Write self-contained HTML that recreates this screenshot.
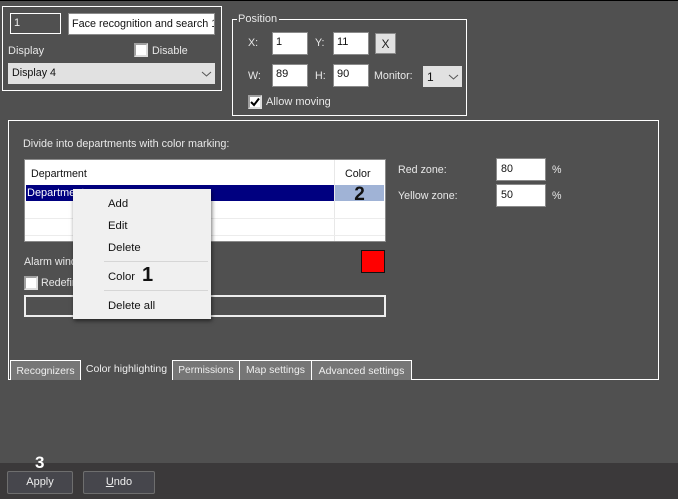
<!DOCTYPE html>
<html><head><meta charset="utf-8">
<style>
html,body{margin:0;padding:0}
body{width:678px;height:499px;overflow:hidden;background:#505050;position:relative;font-family:"Liberation Sans",sans-serif;font-size:10.7px;color:#fff}
div{position:absolute;box-sizing:border-box;white-space:nowrap}
.t{line-height:14px;color:#e8e8e8}
.k{color:#111}
.box{border:1px solid #fff}
.inp{background:#fff;border:1px solid #8a8a8a;color:#111;line-height:18px;padding-left:3px;font-size:11px}
.cb{width:14px;height:14px;background:#fff;border:2px solid #a0a0a0;border-right-color:#ddd;border-bottom-color:#ddd}
.tab{top:360px;height:20px;border:1px solid #fff;border-bottom:0;background:#767676;text-align:center;line-height:20px;color:#eee;font-size:10.5px}
.m{left:108px;color:#111;line-height:14px;font-size:11.3px}
.sep{left:104px;width:104px;height:1px;background:#d6d6d6}
.btn{top:471px;height:23px;background:#46464c;border:1px solid #6e6e6e;border-radius:2px;text-align:center;line-height:21px;color:#eee}
</style></head><body>
<div style="left:0;top:0;width:678px;height:1px;background:#000"></div>

<div class="box" style="left:2px;top:6px;width:220px;height:85px"></div>
<div class="box" style="left:10px;top:13px;width:51px;height:21px;line-height:19px;padding-left:3px;color:#eee;font-size:11px">1</div>
<div class="inp" style="left:68px;top:13px;width:147px;height:22px;line-height:20px;overflow:hidden;font-size:10.8px">Face recognition and search 1</div>
<div class="t" style="left:8px;top:44px;font-size:11px">Display</div>
<div class="cb" style="left:134px;top:43px"></div>
<div class="t" style="left:152px;top:44px">Disable</div>
<div style="left:8px;top:63px;width:207px;height:21px;background:#e1e1e1;color:#111;line-height:21px;padding-left:4px">Display 4</div>
<svg style="position:absolute;left:201px;top:71px" width="11" height="7"><path d="M1 1 L5.5 5 L10 1" fill="none" stroke="#555" stroke-width="1"/></svg>

<div class="box" style="left:232px;top:19px;width:235px;height:97px"></div>
<div class="t" style="left:237px;top:12px;background:#505050;padding:0 2px 0 1px;font-size:11px">Position</div>
<div class="t" style="left:248px;top:36px">X:</div>
<div class="inp" style="left:272px;top:32px;width:36px;height:23px;line-height:19px">1</div>
<div class="t" style="left:315px;top:36px">Y:</div>
<div class="inp" style="left:333px;top:32px;width:36px;height:23px;line-height:19px">11</div>
<div style="left:375px;top:33px;width:21px;height:21px;background:#e1e1e1;border:1px solid #8a8a8a;color:#222;text-align:center;line-height:20px;font-size:12px">X</div>
<div class="t" style="left:248px;top:69px">W:</div>
<div class="inp" style="left:272px;top:64px;width:36px;height:23px">89</div>
<div class="t" style="left:315px;top:69px">H:</div>
<div class="inp" style="left:333px;top:64px;width:36px;height:23px">90</div>
<div class="t" style="left:374px;top:69px">Monitor:</div>
<div style="left:423px;top:66px;width:39px;height:21px;background:#e1e1e1;color:#111;line-height:22px;padding-left:4px;font-size:12px">1</div>
<svg style="position:absolute;left:448px;top:74px" width="11" height="7"><path d="M1 1 L5.5 5 L10 1" fill="none" stroke="#555" stroke-width="1"/></svg>
<div class="cb" style="left:248px;top:95px"></div>
<svg style="position:absolute;left:250px;top:97px" width="10" height="10"><path d="M1 5 L4 8 L9 1.5" fill="none" stroke="#000" stroke-width="2"/></svg>
<div class="t" style="left:266px;top:95px;font-size:11px">Allow moving</div>

<div class="box" style="left:8px;top:120px;width:651px;height:260px"></div>
<div class="t" style="left:23px;top:137px;font-size:10.8px">Divide into departments with color marking:</div>

<div style="left:24px;top:159px;width:362px;height:83px;background:#fff;border:1px solid #8a8a8a"></div>
<div style="left:334px;top:160px;width:1px;height:81px;background:#e8e8e8"></div>
<div style="left:25px;top:218px;width:360px;height:1px;background:#ececec"></div>
<div style="left:25px;top:235px;width:360px;height:1px;background:#ececec"></div>
<div class="k" style="left:31px;top:167px;line-height:14px;font-size:10.7px">Department</div>
<div class="k" style="left:345px;top:167px;line-height:14px;font-size:10.7px">Color</div>
<div style="left:26px;top:185px;width:308px;height:16px;background:#000080;color:#fff;line-height:17px;padding-left:1px;font-size:11px">Department</div>
<div style="left:335px;top:185px;width:49px;height:16px;background:#a0b3d6"></div>
<div style="left:335px;top:184px;width:49px;text-align:center;font-weight:bold;font-size:19px;line-height:22px;color:#111">2</div>

<div class="t" style="left:24px;top:255px;font-size:10.7px">Alarm window</div>
<div class="cb" style="left:24px;top:276px"></div>
<div class="t" style="left:41px;top:276px">Redefine</div>
<div style="left:361px;top:250px;width:24px;height:23px;background:#f00;border:1px solid #111"></div>
<div style="left:24px;top:295px;width:362px;height:22px;border:2px solid #eee"></div>

<div class="t" style="left:398px;top:163px;font-size:10.7px">Red zone:</div>
<div class="inp" style="left:496px;top:158px;width:50px;height:23px;padding-left:4px;font-size:10.7px;line-height:20px">80</div>
<div class="t" style="left:552px;top:163px">%</div>
<div class="t" style="left:398px;top:189px;font-size:10.7px">Yellow zone:</div>
<div class="inp" style="left:496px;top:184px;width:50px;height:23px;padding-left:4px;font-size:10.7px;line-height:20px">50</div>
<div class="t" style="left:552px;top:189px">%</div>

<div class="tab" style="left:10px;width:71px">Recognizers</div>
<div style="left:81px;top:361px;width:91px;height:20px;background:#505050;text-align:center;line-height:17px;color:#eee;font-size:10.5px">Color highlighting</div>
<div class="tab" style="left:172px;width:68px;font-size:10.2px">Permissions</div>
<div class="tab" style="left:239px;width:73px;font-size:10.4px">Map settings</div>
<div class="tab" style="left:311px;width:101px">Advanced settings</div>

<div style="left:73px;top:189px;width:138px;height:130px;background:#f0f0f0;box-shadow:1px 2px 4px rgba(0,0,0,.55)"></div>
<div class="m" style="top:197px">Add</div>
<div class="m" style="top:219px">Edit</div>
<div class="m" style="top:241px">Delete</div>
<div class="sep" style="top:261px"></div>
<div class="m" style="top:270px">Color</div>
<div style="left:142px;top:264px;font-weight:bold;font-size:20px;line-height:22px;color:#111">1</div>
<div class="sep" style="top:290px"></div>
<div class="m" style="top:299px">Delete all</div>

<div style="left:0;top:463px;width:678px;height:36px;background:#3b393a"></div>
<div style="left:35px;top:452px;font-weight:bold;font-size:17px;line-height:22px;color:#fff">3</div>
<div class="btn" style="left:7px;width:66px;font-size:11px">Apply</div>
<div class="btn" style="left:83px;width:72px;font-size:11px"><u>U</u>ndo</div>
</body></html>
